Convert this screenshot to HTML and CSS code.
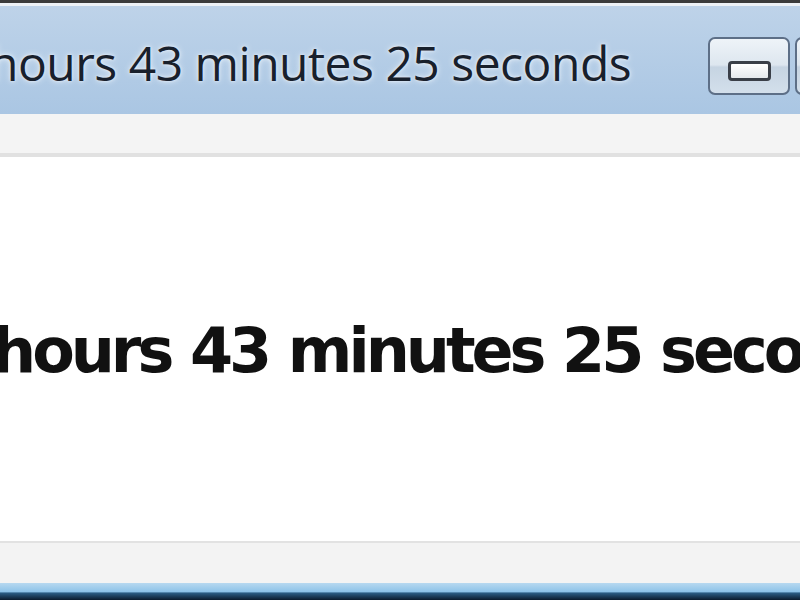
FILE: index.html
```html
<!DOCTYPE html>
<html lang="en">
<head>
    <meta charset="UTF-8">
    <title>Timer</title>
    <link rel="stylesheet" href="styles.css">
</head>
<body>
    <div class="window">
        <div class="frame-top"></div>
        <div class="title-bar">
            <span class="title">hours 43 minutes 25 seconds</span>
            <div class="controls">
                <div class="ctl-btn"><span class="min-glyph"></span></div>
                <div class="ctl-btn next"></div>
            </div>
        </div>
        <div class="strip"></div>
        <div class="content">
            <span class="big">hours 43 minutes 25 seconds</span>
        </div>
        <div class="footer"></div>
        <div class="frame-bottom"></div>
    </div>
</body>
</html>
```

FILE: styles.css
```css
body {
    margin: 0;
    width: 800px;
    height: 600px;
    overflow: hidden;
    background: #ffffff;
}

.window {
    display: flex;
    flex-direction: column;
    height: 600px;
}

.frame-top {
    height: 3px;
    background: #3c3c3c;
    border-bottom: 3px solid #eef2f6;
}

.title-bar {
    height: 108px;
    display: flex;
    align-items: flex-start;
    background: linear-gradient(#bed3e9, #aac6e3);
    overflow: hidden;
}

.title {
    flex: 1;
    min-width: 0;
    margin: 24px 0 0 -11px;
    font-family: "Open Sans", "Noto Sans", sans-serif;
    font-size: 48px;
    letter-spacing: -0.5px;
    color: #18202c;
    white-space: nowrap;
    text-shadow: 0 0 6px #e8f0f8, 0 0 3px #e8f0f8;
}

.controls {
    flex-shrink: 0;
    display: flex;
    gap: 5px;
    margin-top: 31px;
    margin-right: -77px;
}

.ctl-btn {
    width: 78px;
    height: 54px;
    border: 2px solid #5d6f87;
    border-radius: 7px;
    background: linear-gradient(#eef3f8 0%, #dde6ef 48%, #c6d4e2 52%, #d3dfeb 100%);
    display: flex;
    align-items: flex-end;
    justify-content: center;
}

.min-glyph {
    width: 37px;
    height: 14px;
    margin-bottom: 12px;
    border: 3px solid #3a3f48;
    border-radius: 4px;
    background: linear-gradient(#ffffff, #e6e9ed);
}

.strip {
    height: 39px;
    background: #f4f4f4;
    border-bottom: 4px solid #e1e1e1;
}

.content {
    flex: 1;
    display: flex;
    align-items: center;
    overflow: hidden;
    background: #ffffff;
}

.big {
    margin: 2px 0 0 -8px;
    font-family: "DejaVu Sans", Verdana, sans-serif;
    font-weight: bold;
    font-size: 62px;
    letter-spacing: -4px;
    word-spacing: 2px;
    color: #111111;
    white-space: nowrap;
}

.footer {
    height: 40px;
    background: #f3f3f3;
    border-top: 2px solid #e2e2e2;
}

.frame-bottom {
    height: 17px;
    background: linear-gradient(#b7d8f0 0%, #8ec3e8 50%, #2a5b82 60%, #0b1a2c 100%);
}
```
